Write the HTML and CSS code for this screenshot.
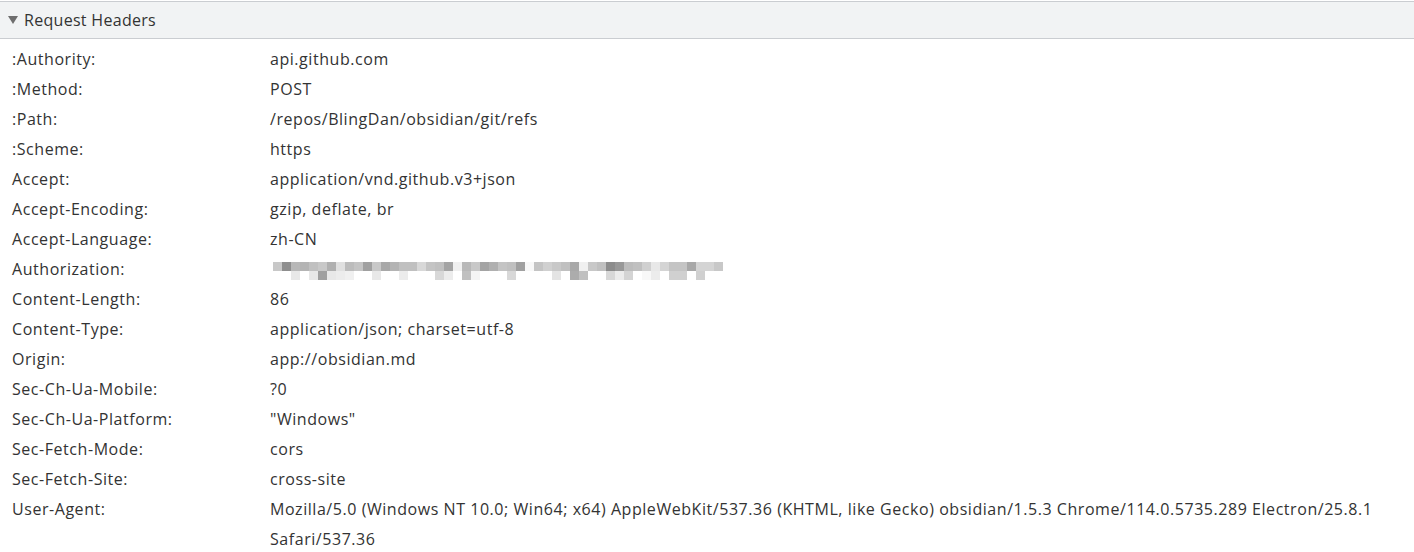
FILE: index.html
```html
<!DOCTYPE html>
<html>
<head>
<meta charset="utf-8">
<link rel="stylesheet" href="styles.css">
</head>
<body>
<section class="panel">
  <div class="panel-header"><span class="arrow"></span><span class="title">Request Headers</span></div>
  <div class="rows">
    <div class="row"><div class="name">:Authority:</div><div class="value">api.github.com</div></div>
    <div class="row"><div class="name">:Method:</div><div class="value">POST</div></div>
    <div class="row"><div class="name">:Path:</div><div class="value">/repos/BlingDan/obsidian/git/refs</div></div>
    <div class="row"><div class="name">:Scheme:</div><div class="value">https</div></div>
    <div class="row"><div class="name">Accept:</div><div class="value">application/vnd.github.v3+json</div></div>
    <div class="row"><div class="name">Accept-Encoding:</div><div class="value">gzip, deflate, br</div></div>
    <div class="row"><div class="name">Accept-Language:</div><div class="value">zh-CN</div></div>
    <div class="row"><div class="name">Authorization:</div><div class="value">
      <svg class="blur" width="456" height="24" viewBox="0 0 456 24" shape-rendering="crispEdges">
        <g transform="translate(3,6)">
        <rect x="0" y="0" width="9" height="9" fill="#c8c8c8"/><rect x="9" y="0" width="9" height="9" fill="#8e8e8e"/><rect x="18" y="0" width="9" height="9" fill="#b8b8b8"/><rect x="27" y="0" width="9" height="9" fill="#b4b4b4"/><rect x="36" y="0" width="9" height="9" fill="#c0c0c0"/><rect x="45" y="0" width="9" height="9" fill="#c8c8c8"/><rect x="54" y="0" width="9" height="9" fill="#b0b0b0"/><rect x="63" y="0" width="9" height="9" fill="#e0e0e0"/><rect x="72" y="0" width="9" height="9" fill="#bcbcbc"/><rect x="81" y="0" width="9" height="9" fill="#c4c4c4"/><rect x="90" y="0" width="9" height="9" fill="#a0a0a0"/><rect x="99" y="0" width="9" height="9" fill="#c8c8c8"/><rect x="108" y="0" width="9" height="9" fill="#a8a8a8"/><rect x="117" y="0" width="9" height="9" fill="#b4b4b4"/><rect x="126" y="0" width="9" height="9" fill="#c0c0c0"/><rect x="135" y="0" width="9" height="9" fill="#c0c0c0"/><rect x="144" y="0" width="9" height="9" fill="#d8d8d8"/><rect x="153" y="0" width="9" height="9" fill="#c4c4c4"/><rect x="162" y="0" width="9" height="9" fill="#c0c0c0"/><rect x="171" y="0" width="9" height="9" fill="#a4a4a4"/><rect x="180" y="0" width="9" height="9" fill="#f0f0f0"/><rect x="189" y="0" width="9" height="9" fill="#b8b8b8"/><rect x="198" y="0" width="9" height="9" fill="#c8c8c8"/><rect x="207" y="0" width="9" height="9" fill="#a4a4a4"/><rect x="216" y="0" width="9" height="9" fill="#b0b0b0"/><rect x="225" y="0" width="9" height="9" fill="#c4c4c4"/><rect x="234" y="0" width="9" height="9" fill="#c0c0c0"/><rect x="243" y="0" width="9" height="9" fill="#a0a0a0"/><rect x="252" y="0" width="9" height="9" fill="#f8f8f8"/><rect x="261" y="0" width="9" height="9" fill="#c4c4c4"/><rect x="270" y="0" width="9" height="9" fill="#d0d0d0"/><rect x="279" y="0" width="9" height="9" fill="#c8c8c8"/><rect x="288" y="0" width="9" height="9" fill="#c0c0c0"/><rect x="297" y="0" width="9" height="9" fill="#a8a8a8"/><rect x="306" y="0" width="9" height="9" fill="#f0f0f0"/><rect x="315" y="0" width="9" height="9" fill="#c8c8c8"/><rect x="324" y="0" width="9" height="9" fill="#c0c0c0"/><rect x="333" y="0" width="9" height="9" fill="#8c8c8c"/><rect x="342" y="0" width="9" height="9" fill="#989898"/><rect x="351" y="0" width="9" height="9" fill="#bcbcbc"/><rect x="360" y="0" width="9" height="9" fill="#c0c0c0"/><rect x="369" y="0" width="9" height="9" fill="#d0d0d0"/><rect x="378" y="0" width="9" height="9" fill="#e8e8e8"/><rect x="387" y="0" width="9" height="9" fill="#d4d4d4"/><rect x="396" y="0" width="9" height="9" fill="#c4c4c4"/><rect x="405" y="0" width="9" height="9" fill="#c4c4c4"/><rect x="414" y="0" width="9" height="9" fill="#a8a8a8"/><rect x="423" y="0" width="9" height="9" fill="#d4d4d4"/><rect x="432" y="0" width="9" height="9" fill="#d4d4d4"/><rect x="441" y="0" width="9" height="9" fill="#c8c8c8"/>
        <rect x="18" y="9" width="9" height="9" fill="#e8e8e8"/><rect x="36" y="9" width="9" height="9" fill="#e8e8e8"/><rect x="45" y="9" width="9" height="9" fill="#a0a0a0"/><rect x="54" y="9" width="9" height="9" fill="#e8e8e8"/><rect x="63" y="9" width="9" height="9" fill="#ececec"/><rect x="72" y="9" width="9" height="9" fill="#f0f0f0"/><rect x="99" y="9" width="9" height="9" fill="#e8e8e8"/><rect x="126" y="9" width="9" height="9" fill="#ececec"/><rect x="162" y="9" width="9" height="9" fill="#d8d8d8"/><rect x="171" y="9" width="9" height="9" fill="#ececec"/><rect x="189" y="9" width="9" height="9" fill="#c0c0c0"/><rect x="198" y="9" width="9" height="9" fill="#f4f4f4"/><rect x="234" y="9" width="9" height="9" fill="#d8d8d8"/><rect x="279" y="9" width="9" height="9" fill="#e4e4e4"/><rect x="297" y="9" width="9" height="9" fill="#acacac"/><rect x="306" y="9" width="9" height="9" fill="#c0c0c0"/><rect x="333" y="9" width="9" height="9" fill="#d8d8d8"/><rect x="342" y="9" width="9" height="9" fill="#ececec"/><rect x="351" y="9" width="9" height="9" fill="#d4d4d4"/><rect x="369" y="9" width="9" height="9" fill="#f8f8f8"/><rect x="378" y="9" width="9" height="9" fill="#ececec"/><rect x="396" y="9" width="9" height="9" fill="#d0d0d0"/><rect x="405" y="9" width="9" height="9" fill="#d0d0d0"/><rect x="423" y="9" width="9" height="9" fill="#d0d0d0"/>
        </g>
      </svg>
    </div></div>
    <div class="row"><div class="name">Content-Length:</div><div class="value">86</div></div>
    <div class="row"><div class="name">Content-Type:</div><div class="value">application/json; charset=utf-8</div></div>
    <div class="row"><div class="name">Origin:</div><div class="value">app://obsidian.md</div></div>
    <div class="row"><div class="name">Sec-Ch-Ua-Mobile:</div><div class="value">?0</div></div>
    <div class="row"><div class="name">Sec-Ch-Ua-Platform:</div><div class="value">"Windows"</div></div>
    <div class="row"><div class="name">Sec-Fetch-Mode:</div><div class="value">cors</div></div>
    <div class="row"><div class="name">Sec-Fetch-Site:</div><div class="value">cross-site</div></div>
    <div class="row"><div class="name">User-Agent:</div><div class="value">Mozilla/5.0 (Windows NT 10.0; Win64; x64) AppleWebKit/537.36 (KHTML, like Gecko) obsidian/1.5.3 Chrome/114.0.5735.289 Electron/25.8.1 Safari/537.36</div></div>
  </div>
</section>
</body>
</html>
```
FILE: styles.css
```css
html, body {
  margin: 0;
  padding: 0;
  background: #ffffff;
}
body {
  font-family: "Open Sans", "Noto Sans", sans-serif;
  font-size: 16px;
  letter-spacing: 0.55px;
  color: #333333;
  padding-top: 1px;
}
.panel-header {
  display: flex;
  align-items: center;
  height: 36px;
  background: #f1f3f4;
  border-top: 1px solid #cacdd1;
  border-bottom: 1px solid #cacdd1;
  padding-left: 8px;
}
.arrow {
  width: 0;
  height: 0;
  border-left: 5px solid transparent;
  border-right: 5px solid transparent;
  border-top: 8px solid #6e6e6e;
  margin-right: 6px;
}
.title {
  color: #333333;
  letter-spacing: 0.3px;
}
.rows {
  padding-top: 5px;
}
.row {
  display: flex;
  line-height: 30px;
}
.name {
  width: 258px;
  flex: none;
  padding-left: 12px;
}
.value {
  flex: 1;
  padding-right: 30px;
}
.blur {
  display: block;
  margin-top: 2px;
}
```
